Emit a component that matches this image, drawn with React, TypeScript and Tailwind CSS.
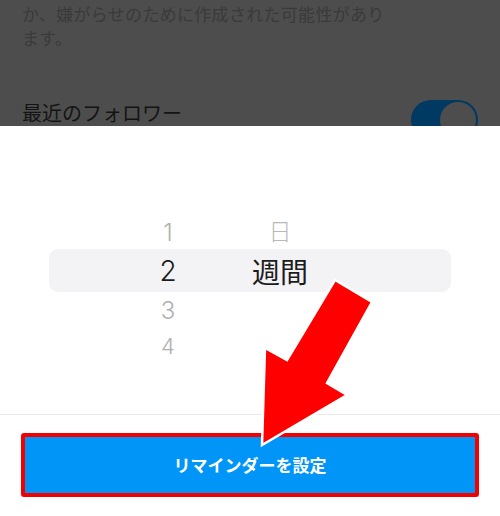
import React from "react";

const jp = { fontFamily: '"Noto Sans CJK JP", "Noto Sans", sans-serif' };
const num = { fontFamily: 'Inter, "Liberation Sans", "Noto Sans CJK JP", sans-serif' };

export default function App() {
  return (
    <div className="relative w-[500px] h-[516px] overflow-hidden bg-white" style={jp}>
      {/* Dimmed background content */}
      <div className="h-[126px] overflow-hidden bg-[#4d4d4d] px-[22px]">
        <p className="pt-[2px] text-[17px] leading-[24px] text-[#3a3a3a] tracking-[0.3px]">
          か、嫌がらせのために作成された可能性があり
          <br />
          ます。
        </p>
        <div className="mt-[50px] flex items-start justify-between">
          <span className="text-[20px] leading-[26px] text-[#141414]">最近のフォロワー</span>
          <div className="flex h-[40px] w-[67px] items-center justify-end rounded-full bg-[#003a63] p-[2px]">
            <div className="h-[36px] w-[36px] rounded-full bg-[#4d4d4d]" />
          </div>
        </div>
      </div>

      {/* Sheet */}
      <div className="pt-[90px]">
        <div className="mx-[49px]" style={num}>
          <div className="flex h-[33px] items-center text-[24px] font-light text-[#b0b0b0]">
            <span className="ml-[69px] w-[100px] text-center">1</span>
            <span className="w-[124px] -translate-y-[2px] text-center text-[23px] text-[#b8b8b8]" style={jp}>日</span>
          </div>
          <div className="flex h-[43px] items-center rounded-[9px] bg-[#f3f3f5] text-[28px] text-[#1c1c1c]">
            <span className="ml-[69px] w-[100px] text-center font-light">2</span>
            <span className="w-[124px] text-center" style={jp}>週間</span>
          </div>
          <div className="flex h-[38px] items-center text-[24px] font-light text-[#b0b0b0]">
            <span className="ml-[69px] w-[100px] text-center">3</span>
          </div>
          <div className="flex h-[32px] items-center text-[22px] font-light text-[#b0b0b0]">
            <span className="ml-[69px] w-[100px] text-center">4</span>
          </div>
        </div>
        <div className="mt-[52px] border-t border-[#ebebeb]" />
        <div className="mx-[21px] mt-[18px] h-[64px] rounded-[3px] border-4 border-[#f40000]">
          <div className="flex h-full items-center justify-center bg-[#0095f6] text-[17px] font-bold text-white">
            リマインダーを設定
          </div>
        </div>
      </div>

      {/* Annotation arrow */}
      <svg className="pointer-events-none absolute inset-0" width="500" height="516" viewBox="0 0 500 516">
        <polygon
          points="262,445 265,348 287,360 335,280 372,302 327,383 347,395"
          fill="#ff0000"
          stroke="#ffffff"
          strokeWidth="2.5"
          strokeLinejoin="miter"
        />
      </svg>
    </div>
  );
}
